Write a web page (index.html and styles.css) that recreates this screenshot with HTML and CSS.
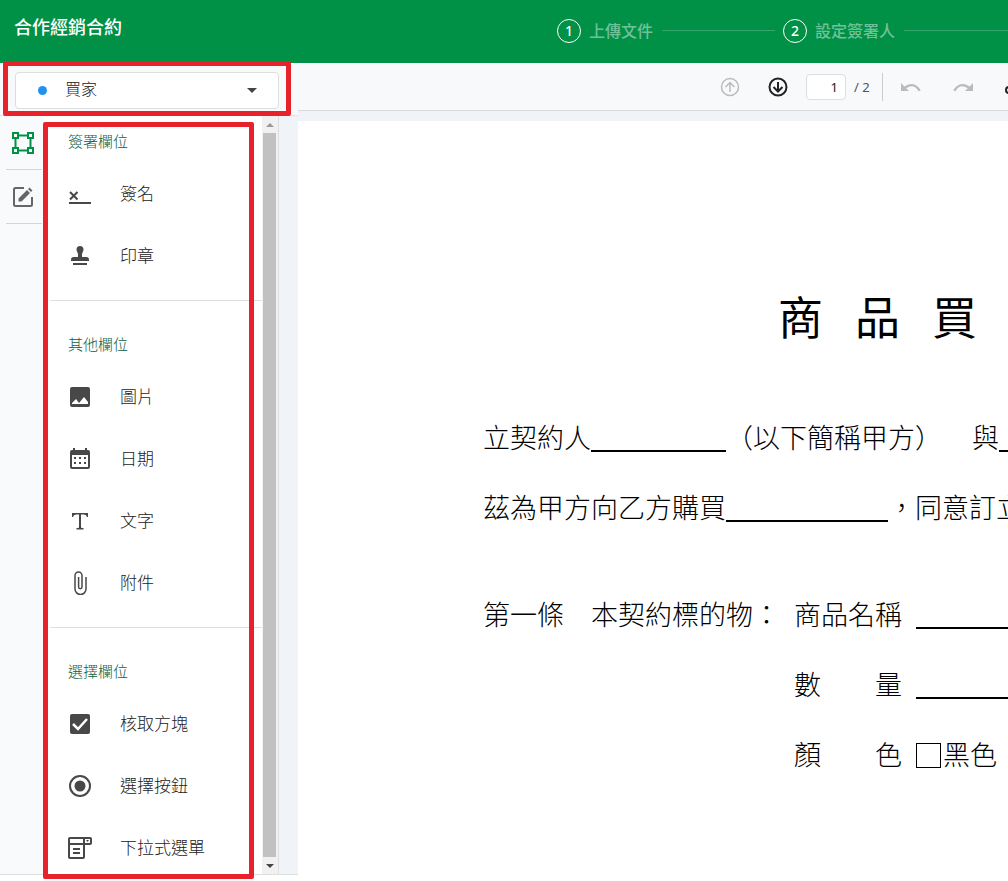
FILE: index.html
```html
<!DOCTYPE html>
<html lang="zh-Hant">
<head>
  <meta charset="UTF-8">
  <meta name="viewport" content="width=device-width, initial-scale=1.0">
  <title>合作經銷合約</title>
  <link rel="stylesheet" href="styles.css">
</head>
<body>
  <div class="app">
    <header class="header">
      <h1 class="header-title">合作經銷合約</h1>
      <ol class="steps">
        <li class="step"><span class="step-num">1</span><span class="step-name">上傳文件</span></li>
        <li class="step"><span class="step-num">2</span><span class="step-name">設定簽署人</span></li>
      </ol>
    </header>

    <div class="main">
      <aside class="sidebar">
        <div class="signer">
          <div class="signer-box">
            <span class="signer-dot"></span>
            <select class="signer-select" aria-label="簽署人">
              <option>買家</option>
            </select>
            <span class="signer-arrow"></span>
          </div>
        </div>
        <div class="sidebar-body">
          <nav class="rail">
            <button class="rail-btn active" type="button" aria-label="欄位">
              <svg width="24" height="24" viewBox="0 0 24 24" fill="none" stroke="currentColor" stroke-width="2">
                <path d="M2 2h5v5H2zM17 2h5v5h-5zM2 17h5v5H2zM17 17h5v5h-5zM7 4.500h10M7 19.500h10M4.500 7v10M19.500 7v10"/>
              </svg>
            </button>
            <button class="rail-btn" type="button" aria-label="編輯">
              <svg width="24" height="24" viewBox="0 0 24 24" fill="none" stroke="currentColor" stroke-width="2">
                <path d="M13 3H4.500Q3 3 3 4.500V19.500Q3 21 4.500 21H19.500Q21 21 21 19.500V12"/>
                <path d="M7.500 16.500v-3l8.500-8.500 3 3-8.500 8.500zM17 4l1.500-1.500 3 3L20 7z" fill="currentColor" stroke="none"/>
              </svg>
            </button>
          </nav>
          <div class="panel">
            <section class="group">
              <h2 class="group-title">簽署欄位</h2>
              <button class="field" type="button">
                <svg class="icon" viewBox="0 0 24 24" fill="none" stroke="currentColor" stroke-width="2">
                  <path d="M2 10l7.500 7.500M9.500 10L2 17.500M1 21h22"/>
                </svg>
                <span>簽名</span>
              </button>
              <button class="field" type="button">
                <svg class="icon" viewBox="0 0 24 24" fill="currentColor">
                  <path d="M12 2a3.500 3.500 0 0 1 3.500 3.500c0 2-1.500 3-1.500 5V13h4.500q2.500 0 2.500 3v1H3v-1q0-3 2.500-3H10v-2.500c0-2-1.500-3-1.500-5A3.500 3.500 0 0 1 12 2zM5 19h14v2H5z"/>
                </svg>
                <span>印章</span>
              </button>
            </section>
            <section class="group">
              <h2 class="group-title">其他欄位</h2>
              <button class="field" type="button">
                <svg class="icon" viewBox="0 0 24 24" fill="currentColor" fill-rule="evenodd">
                  <path d="M4 2h16a2 2 0 0 1 2 2v16a2 2 0 0 1-2 2H4a2 2 0 0 1-2-2V4a2 2 0 0 1 2-2zM4 19h16v-2l-4-5-5 6-3-4-4 4z"/>
                </svg>
                <span>圖片</span>
              </button>
              <button class="field" type="button">
                <svg class="icon" viewBox="0 0 24 24" fill="currentColor" fill-rule="evenodd">
                  <path d="M5 1h2v2h10V1h2v2h1a2 2 0 0 1 2 2v15a2 2 0 0 1-2 2H4a2 2 0 0 1-2-2V5a2 2 0 0 1 2-2h1zM4 8v12h16V8z"/>
                  <path d="M6 10h2v2H6zM11 10h2v2h-2zM16 10h2v2h-2zM6 15h2v2H6zM11 15h2v2h-2zM16 15h2v2h-2z"/>
                </svg>
                <span>日期</span>
              </button>
              <button class="field" type="button">
                <svg class="icon" viewBox="0 0 24 24" fill="currentColor">
                  <path d="M4 4h16v4h-1q-.5-2.500-3-2.500h-3V18q0 1 1 1h1.500v1.500h-7V19H10q1 0 1-1V5.500H8Q5.500 5.500 5 8H4z"/>
                </svg>
                <span>文字</span>
              </button>
              <button class="field" type="button">
                <svg class="icon" viewBox="0 0 24 24" fill="none" stroke="currentColor" stroke-width="1.500">
                  <path d="M18 6v12a5.500 5.500 0 0 1-11 0V4.500a3.500 3.500 0 0 1 7 0V16a1.700 1.700 0 0 1-3.400 0V6"/>
                </svg>
                <span>附件</span>
              </button>
            </section>
            <section class="group">
              <h2 class="group-title">選擇欄位</h2>
              <button class="field" type="button">
                <svg class="icon" viewBox="0 0 24 24">
                  <rect x="2" y="2" width="20" height="20" rx="2" fill="currentColor"/>
                  <path d="M5 12l5 5 9-10" fill="none" stroke="#fff" stroke-width="2.500"/>
                </svg>
                <span>核取方塊</span>
              </button>
              <button class="field" type="button">
                <svg class="icon" viewBox="0 0 24 24">
                  <circle cx="12" cy="12" r="10" fill="none" stroke="currentColor" stroke-width="2"/>
                  <circle cx="12" cy="12" r="5.500" fill="currentColor"/>
                </svg>
                <span>選擇按鈕</span>
              </button>
              <button class="field" type="button">
                <svg class="icon" viewBox="0 0 24 24" fill="none" stroke="currentColor" stroke-width="2">
                  <path d="M2 2h20q1 0 1 1v4q0 1-1 1H1V3q0-1 1-1zM16 2v6M1 8v13q0 1 1 1h13q1 0 1-1V8M5 13h7M5 17h7"/>
                  <path d="M18 4h3l-1.500 2z" fill="currentColor" stroke="none"/>
                </svg>
                <span>下拉式選單</span>
              </button>
            </section>
          </div>
          <div class="scrollbar" aria-hidden="true">
            <span class="scroll-arrow up"></span>
            <span class="scroll-thumb"></span>
            <span class="scroll-arrow down"></span>
          </div>
        </div>
        <div class="sidebar-foot"></div>
      </aside>

      <main class="viewer">
        <div class="toolbar">
          <button class="tool disabled" type="button" aria-label="上一頁">
            <svg width="20" height="20" viewBox="0 0 20 20" fill="none" stroke="currentColor" stroke-width="1.500">
              <circle cx="10" cy="10" r="8.500"/><path d="M10 15V5.500M5.500 10L10 5.500l4.500 4.500"/>
            </svg>
          </button>
          <button class="tool" type="button" aria-label="下一頁">
            <svg width="20" height="20" viewBox="0 0 20 20" fill="none" stroke="currentColor" stroke-width="2">
              <circle cx="10" cy="10" r="8.500"/><path d="M10 5v9.500M5.500 10l4.500 4.500 4.500-4.500"/>
            </svg>
          </button>
          <label class="pager"><input class="page-input" type="text" value="1" aria-label="頁碼"><span>/ 2</span></label>
          <div class="history">
            <button class="tool disabled" type="button" aria-label="復原">
              <svg width="20" height="20" viewBox="0 0 20 20">
                <path d="M0 6v8h8L5.200 11.200Q13 6 17.500 14.300l2.200-.8Q14 3 3.400 9.400z" fill="currentColor"/>
              </svg>
            </button>
            <button class="tool disabled" type="button" aria-label="重做">
              <svg width="20" height="20" viewBox="0 0 20 20">
                <path d="M20 6v8h-8l2.800-2.800Q7 6 2.500 14.300l-2.200-.8Q6 3 16.600 9.400z" fill="currentColor"/>
              </svg>
            </button>
            <button class="tool" type="button" aria-label="連結">
              <svg width="20" height="20" viewBox="0 0 20 20" fill="none" stroke="currentColor" stroke-width="2">
                <circle cx="4" cy="13" r="3"/><circle cx="16" cy="13" r="3"/><path d="M7 13h6"/>
              </svg>
            </button>
          </div>
        </div>
        <article class="page">
          <h2 class="page-title"><span>商</span><span>品</span><span>買</span></h2>
          <p class="line"><span>立契約人</span><span class="blank short"></span><span>（以下簡稱甲方）</span><span class="with">與</span><span class="blank long"></span></p>
          <p class="line"><span>茲為甲方向乙方購買</span><span class="blank"></span><span>，同意訂立</span></p>
          <div class="article">
            <p class="line clause">第一條　本契約標的物：</p>
            <dl class="terms">
              <div class="line term"><dt><span>商品名稱</span></dt><dd><span class="blank long"></span></dd></div>
              <div class="line term"><dt><span>數</span><span>量</span></dt><dd><span class="blank long"></span></dd></div>
              <div class="line term"><dt><span>顏</span><span>色</span></dt><dd><label class="color"><input class="color-box" type="checkbox">黑色</label></dd></div>
            </dl>
          </div>
        </article>
      </main>
    </div>
  </div>
  <div class="mark mark-signer"></div>
  <div class="mark mark-fields"></div>
</body>
</html>
```
FILE: styles.css
```css
* {
  box-sizing: border-box;
  margin: 0;
  padding: 0;
}
body {
  position: relative;
  font: 16px/22px "Noto Sans", "Noto Sans CJK TC", sans-serif;
  color: #333;
  background: #fff;
  overflow: hidden;
}
button {
  border: none;
  background: none;
  font: inherit;
  color: inherit;
  cursor: pointer;
}
svg {
  display: block;
}
.app {
  display: flex;
  flex-direction: column;
  height: 100vh;
}

/* header */
.header {
  display: flex;
  flex: none;
  height: 63px;
  background: #009147;
  color: #fff;
}
.header-title {
  flex: none;
  width: 557px;
  padding: 16px 14px;
  font-size: 18px;
  font-weight: 500;
}
.steps {
  display: flex;
  flex: 1;
  align-items: center;
  padding-bottom: 2px;
  list-style: none;
  white-space: nowrap;
}
.step {
  display: flex;
  flex: none;
  align-items: center;
  width: 226px;
}
.step:last-child {
  flex: 1;
}
.step-num {
  width: 24px;
  height: 24px;
  border: 1px solid #fff;
  border-radius: 50%;
  font-size: 14px;
  font-weight: 500;
  text-align: center;
}
.step-name {
  margin: 0 9px 0 8px;
  font-weight: 500;
  color: rgba(255, 255, 255, 0.45);
}
.step::after {
  content: "";
  flex: 1;
  height: 1px;
  margin-right: 8px;
  background: rgba(255, 255, 255, 0.2);
}
.step:last-child::after {
  margin-right: 0;
}

/* sidebar */
.main {
  display: flex;
  flex: 1;
  min-height: 0;
}
.sidebar {
  display: flex;
  flex: none;
  flex-direction: column;
  width: 298px;
  background: #f0f4f8;
}
.signer {
  flex: none;
  height: 53px;
  padding: 9px 19px 0 15px;
  border-bottom: 1px solid #e0e2e4;
  background: #f8f9fb;
}
.signer-box {
  display: flex;
  align-items: center;
  position: relative;
  height: 37px;
  border: 1px solid #dcdee0;
  border-radius: 4px;
  background: #fff;
}
.signer-dot {
  position: absolute;
  left: 22px;
  width: 9px;
  height: 9px;
  border-radius: 50%;
  background: #2490f0;
}
.signer-select {
  width: 100%;
  height: 100%;
  padding: 0 0 3px 49px;
  border: none;
  background: none;
  appearance: none;
  font: inherit;
  font-weight: 300;
  color: #222;
}
.signer-arrow {
  position: absolute;
  right: 21px;
  border: 5px solid transparent;
  border-top-color: #444;
  border-bottom: none;
}
.sidebar-body {
  display: flex;
  flex: 1;
  min-height: 0;
  margin-right: 19px;
  border-right: 1px solid #dcdee0;
}
.sidebar-foot {
  flex: none;
  height: 7px;
  border-top: 1px solid #dcdee0;
  background: #fff;
}
.rail {
  flex: none;
  width: 44px;
  padding-left: 6px;
  background: #f8fafc;
}
.rail-btn {
  display: flex;
  align-items: center;
  width: 36px;
  height: 54px;
  padding-left: 5px;
  border-bottom: 1px solid #d4d6d8;
  color: #666;
}
.rail-btn.active {
  color: #009147;
}
.panel {
  flex: 1;
  overflow: hidden;
  padding-left: 6px;
  background: #fff;
}
.group {
  padding: 32px 0 13px 18px;
  border-bottom: 1px solid #dcdee0;
}
.group:first-child {
  padding-top: 14px;
}
.group:last-child {
  border-bottom: none;
}
.group-title {
  margin-bottom: 11px;
  font-size: 15px;
  font-weight: 300;
  color: #0b6046;
}
.field {
  display: flex;
  align-items: center;
  gap: 28px;
  width: 100%;
  height: 62px;
  font-size: 17px;
  font-weight: 300;
  color: #222;
}
.icon {
  width: 24px;
  height: 24px;
  color: #484848;
}
.scrollbar {
  display: flex;
  flex-direction: column;
  flex: none;
  align-items: center;
  width: 16px;
  padding-right: 1px;
  background: #f1f1f1;
}
.scroll-arrow {
  display: flex;
  flex: none;
  align-items: center;
  height: 17px;
}
.scroll-arrow::before {
  content: "";
  border: 4px solid transparent;
}
.scroll-arrow.up::before {
  border-top: none;
  border-bottom-color: #999;
}
.scroll-arrow.down::before {
  border-bottom: none;
  border-top-color: #444;
}
.scroll-thumb {
  flex: 1;
  width: 13px;
  background: #c1c1c1;
}

/* document viewer */
.viewer {
  display: flex;
  flex: 1;
  flex-direction: column;
  min-width: 0;
  overflow: hidden;
  background: #f0f4f8;
}
.toolbar {
  display: flex;
  flex: none;
  align-items: center;
  gap: 28px;
  height: 48px;
  margin-bottom: 10px;
  padding-left: 422px;
  border-bottom: 1px solid #d8dadc;
  background: #f8f9fb;
}
.tool {
  flex: none;
  color: #222;
}
.tool.disabled {
  color: #bbb;
}
.pager {
  display: flex;
  flex: none;
  align-items: center;
  gap: 8px;
  height: 28px;
  margin-left: -10px;
  padding-right: 12px;
  border-right: 1px solid #ccc;
  font-size: 13px;
  color: #555;
}
.page-input {
  width: 40px;
  height: 26px;
  padding-right: 7px;
  border: 1px solid #dcdee0;
  border-radius: 4px;
  background: #fff;
  font: inherit;
  color: #222;
  text-align: right;
}
.history {
  display: flex;
  gap: 32px;
  margin-left: -10px;
}
.page {
  flex: 1;
  padding: 161px 0 0 185px;
  background: #fff;
  color: #000;
  font-weight: 300;
  white-space: nowrap;
}
.page-title {
  display: flex;
  gap: 32px;
  margin-bottom: 49px;
  padding-left: 295px;
  font-size: 45px;
  font-weight: 400;
  line-height: 72px;
}
.line {
  display: flex;
  align-items: center;
  height: 70px;
  font-size: 27px;
}
.with {
  margin-left: 30px;
}
.blank {
  flex: none;
  width: 162px;
  height: 28px;
  border-bottom: 2px solid #000;
}
.blank.short {
  width: 135px;
}
.blank.long {
  width: 240px;
}
.article {
  display: flex;
  gap: 14px;
  margin-top: 37px;
}
.term {
  gap: 14px;
}
.term dt {
  display: flex;
  justify-content: space-between;
  width: 108px;
}
.term dd {
  display: flex;
}
.color {
  display: flex;
  align-items: center;
  gap: 2px;
}
.color-box {
  width: 25px;
  height: 25px;
  border: 1px solid #000;
  appearance: none;
}

/* highlight frames */
.mark {
  position: absolute;
  border: 5px solid #e8222a;
  border-radius: 2px;
  pointer-events: none;
}
.mark-signer {
  top: 61px;
  left: 3px;
  width: 288px;
  height: 55px;
}
.mark-fields {
  top: 122px;
  left: 43px;
  width: 211px;
  height: 757px;
}
```
